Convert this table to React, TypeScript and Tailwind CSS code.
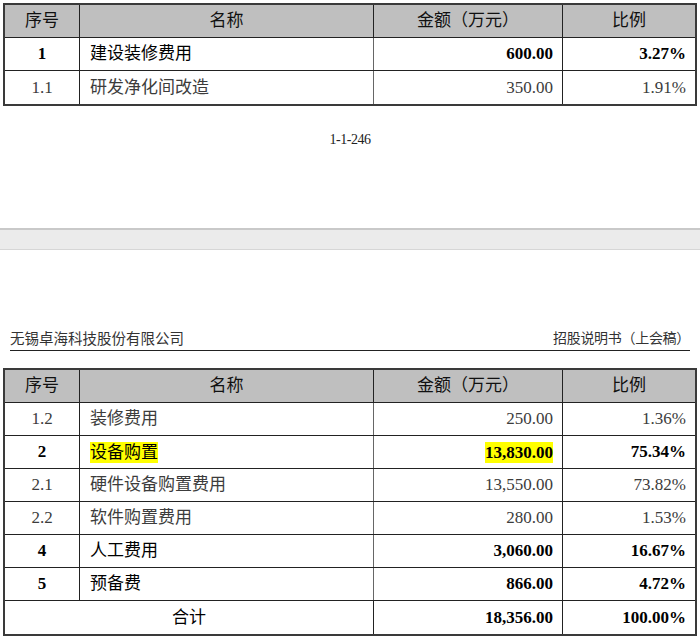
const serif = "font-['Liberation_Serif','Noto_Sans_CJK_SC',serif]"

type Row = {
  no: string
  name: string
  amount: string
  ratio: string
  bold?: boolean
  mark?: boolean
}

const pageOne: Row[] = [
  { no: '1', name: '建设装修费用', amount: '600.00', ratio: '3.27%', bold: true },
  { no: '1.1', name: '研发净化间改造', amount: '350.00', ratio: '1.91%' },
]

const pageTwo: Row[] = [
  { no: '1.2', name: '装修费用', amount: '250.00', ratio: '1.36%' },
  { no: '2', name: '设备购置', amount: '13,830.00', ratio: '75.34%', bold: true, mark: true },
  { no: '2.1', name: '硬件设备购置费用', amount: '13,550.00', ratio: '73.82%' },
  { no: '2.2', name: '软件购置费用', amount: '280.00', ratio: '1.53%' },
  { no: '4', name: '人工费用', amount: '3,060.00', ratio: '16.67%', bold: true },
  { no: '5', name: '预备费', amount: '866.00', ratio: '4.72%', bold: true },
]

const grid = 'grid grid-cols-[75px_294px_189px_132px]'

function Header() {
  return (
    <div className={`${grid} h-[33px] bg-[#bfbfbf] border-b border-[#222] text-[17px] text-[#111]`}>
      <div className="flex items-center justify-center border-r border-[#222]">序号</div>
      <div className="flex items-center justify-center border-r border-[#222]">名称</div>
      <div className="flex items-center justify-center border-r border-[#222]">金额（万元）</div>
      <div className="flex items-center justify-center">比例</div>
    </div>
  )
}

function Line({ row, last }: { row: Row; last?: boolean }) {
  const tone = row.bold ? 'text-black' : 'text-[#3c3c3c]'
  const num = row.bold ? 'font-bold' : ''
  return (
    <div className={`${grid} h-[33px] text-[17px] ${tone} ${last ? '' : 'border-b border-[#222]'}`}>
      <div className={`flex items-center justify-center border-r border-[#222] ${num}`}>{row.no}</div>
      <div className="flex items-center pl-[10px] border-r border-[#666]">
        <span className={row.mark ? 'bg-[#ffff00] leading-[21px]' : ''}>{row.name}</span>
      </div>
      <div className={`flex items-center justify-end pr-[9px] border-r border-[#222] ${num}`}>
        <span className={row.mark ? 'bg-[#ffff00] leading-[21px]' : ''}>{row.amount}</span>
      </div>
      <div className={`flex items-center justify-end pr-[9px] ${num}`}>{row.ratio}</div>
    </div>
  )
}

export default function App() {
  return (
    <div className={`w-[700px] h-[640px] overflow-hidden bg-white ${serif}`}>
      {/* page 1 tail */}
      <div className="h-[228px] pt-[3px]">
        <div className="ml-[3px] w-[694px] border-2 border-[#3a3a3a]">
          <Header />
          {pageOne.map((r, i) => (
            <Line key={r.no} row={r} last={i === pageOne.length - 1} />
          ))}
        </div>
        <div className="mt-[23px] text-center text-[14px] text-[#222] tracking-[-0.5px]">1-1-246</div>
      </div>

      {/* viewer gap between pages */}
      <div className="h-[22px] bg-[#ebebeb] border-t-2 border-[#c9c9c9] border-b border-b-[#d6d6d6]" />

      {/* page 2 */}
      <div className="pt-[79px]">
        <div className="mx-[10px] flex items-end justify-between border-b border-[#222] pb-[1px] text-[14.5px] leading-[20px] text-[#333]">
          <span>无锡卓海科技股份有限公司</span>
          <span className="text-[14px] tracking-[-0.3px]">招股说明书（上会稿）</span>
        </div>
        <div className="mt-[17px] ml-[3px] w-[694px] border-2 border-[#3a3a3a]">
          <Header />
          {pageTwo.map((r) => (
            <Line key={r.no} row={r} />
          ))}
          <div className="grid grid-cols-[369px_189px_132px] h-[33px] text-[17px] text-black">
            <div className="flex items-center justify-center border-r border-[#222]">合计</div>
            <div className="flex items-center justify-end pr-[9px] border-r border-[#222] font-bold">18,356.00</div>
            <div className="flex items-center justify-end pr-[9px] font-bold">100.00%</div>
          </div>
        </div>
      </div>
    </div>
  )
}
